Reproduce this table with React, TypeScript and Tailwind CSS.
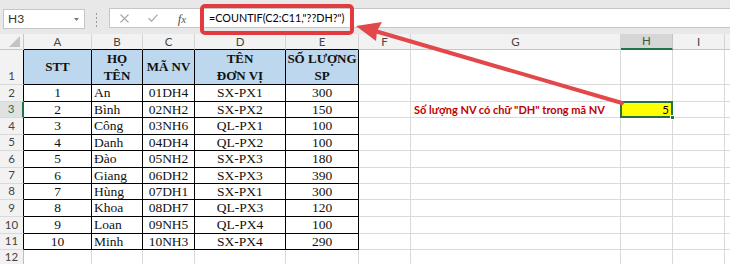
import React from 'react';

const serif = "font-['Liberation_Serif',serif]";

const data: [number, string, string, string, number][] = [
  [1, 'An', '01DH4', 'SX-PX1', 300],
  [2, 'Bình', '02NH2', 'SX-PX2', 150],
  [3, 'Công', '03NH6', 'QL-PX1', 100],
  [4, 'Danh', '04DH4', 'QL-PX2', 100],
  [5, 'Đào', '05NH2', 'SX-PX3', 180],
  [6, 'Giang', '06DH2', 'SX-PX3', 390],
  [7, 'Hùng', '07DH1', 'SX-PX1', 300],
  [8, 'Khoa', '08DH7', 'QL-PX3', 120],
  [9, 'Loan', '09NH5', 'QL-PX4', 100],
  [10, 'Minh', '10NH3', 'SX-PX4', 290],
];

const GRID = 'border-r border-b border-[#dadada]';
const TB = 'border-r border-b border-black';

function ColHeaders() {
  const cols = ['A', 'B', 'C', 'D', 'E', 'F', 'G', 'H', 'I'];
  return (
    <>
      <div className="relative bg-[#f2f2f2] border-r border-b border-[#c6c6c6]">
        <svg className="absolute right-[3px] bottom-[2px]" width="11" height="11" viewBox="0 0 11 11">
          <path d="M11 0 L11 11 L0 11 Z" fill="#c4c4c4" />
        </svg>
      </div>
      {cols.map((c) => {
        let cls = 'bg-[#f2f2f2] border-r border-[#d4d4d4] border-b border-b-[#c6c6c6] text-[#444]';
        if (['A', 'B', 'C', 'D', 'E'].includes(c)) cls = 'bg-[#f2f2f2] border-r border-[#d4d4d4] border-b border-b-black text-[#444]';
        if (c === 'H') cls = 'bg-[#d6d6d6] border-r border-[#c6c6c6] border-b-2 border-b-[#217346] text-[#3a5a45]';
        return (
          <div key={c} className={`${cls} flex items-center justify-center text-[11.5px] leading-none`}>
            {c}
          </div>
        );
      })}
      <div className="bg-[#f2f2f2] border-b border-[#c6c6c6]" />
    </>
  );
}

function RowNum({ n, table, selected }: { n: number; table: boolean; selected?: boolean }) {
  let cls = 'bg-[#f2f2f2] text-[#444] border-b border-[#d9d9d9] border-r border-r-[#bdbdbd]';
  if (table) cls = 'bg-[#f2f2f2] text-[#444] border-b border-[#d9d9d9] border-r border-r-black';
  if (selected) cls = 'bg-[#e1e1e1] text-[#217346] border-b border-[#d9d9d9] border-r-2 border-r-[#217346]';
  return (
    <div className={`${cls} flex items-end justify-center pb-[1px] text-[11.5px] leading-[14px]`}>{n}</div>
  );
}

export default function App() {
  return (
    <div className="relative w-[730px] h-[264px] overflow-hidden bg-white font-['Lato',sans-serif]">
      {/* Formula bar */}
      <div className="h-[34px] bg-[#e8e8e8] flex items-start">
        <div className="mt-[9px] ml-[3px] w-[82px] h-[20px] bg-white border border-[#c6c6c6] flex items-center justify-between pl-[4px] pr-[5px]">
          <span className="text-[12px] text-[#333]">H3</span>
          <svg width="5" height="3" viewBox="0 0 5 3">
            <path d="M0 0 H5 L2.5 3 Z" fill="#7a7a7a" />
          </svg>
        </div>
        <div className="ml-[11px] mt-[13px] flex flex-col gap-[2px]">
          <div className="w-[1px] h-[2px] bg-[#9a9a9a]" />
          <div className="w-[1px] h-[2px] bg-[#9a9a9a]" />
          <div className="w-[1px] h-[2px] bg-[#9a9a9a]" />
          <div className="w-[1px] h-[2px] bg-[#9a9a9a]" />
        </div>
        <div className="ml-[12px] mt-[8px] flex-1 h-[20px] bg-white border-y border-l border-[#c6c6c6] flex items-center">
          <div className="w-[28px] flex justify-center">
            <svg width="9" height="9" viewBox="0 0 9 9">
              <path d="M0.5 0.5 L8.5 8.5 M8.5 0.5 L0.5 8.5" stroke="#a8a8a8" strokeWidth="1.1" />
            </svg>
          </div>
          <div className="w-[30px] flex justify-center">
            <svg width="10" height="8" viewBox="0 0 10 8">
              <path d="M0.5 4.2 L3.6 7.2 L9.5 0.6" stroke="#a8a8a8" strokeWidth="1.2" fill="none" />
            </svg>
          </div>
          <div className="w-[28px] flex justify-center">
            <span className="font-['Liberation_Serif',serif] italic text-[13px] text-[#555] leading-none">
              f<span className="text-[11px]">x</span>
            </span>
          </div>
          <div className="pl-[13px] text-[10.8px] text-black leading-none">=COUNTIF(C2:C11,"??DH?")</div>
        </div>
      </div>

      {/* Sheet */}
      <div className="grid grid-cols-[24px_68px_51px_52px_91px_73px_52px_210px_52px_52px_1fr] grid-rows-[16px_35px_17px_16px_17px_16px_17px_16px_16px_17px_17px_16px_16px]">
        <ColHeaders />

        {/* Row 1 */}
        <RowNum n={1} table />
        <div className={`${TB} bg-[#bdd7ee] ${serif} font-bold text-[13px] text-[#111] flex items-center justify-center`}>STT</div>
        <div className={`${TB} bg-[#bdd7ee] ${serif} font-bold text-[13px] text-[#111] flex flex-col items-center justify-center leading-[17px]`}>
          <span>HỌ</span>
          <span>TÊN</span>
        </div>
        <div className={`${TB} bg-[#bdd7ee] ${serif} font-bold text-[13px] text-[#111] flex items-center justify-center`}>MÃ NV</div>
        <div className={`${TB} bg-[#bdd7ee] ${serif} font-bold text-[13px] text-[#111] flex flex-col items-center justify-center leading-[17px]`}>
          <span>TÊN</span>
          <span>ĐƠN VỊ</span>
        </div>
        <div className={`${TB} bg-[#bdd7ee] ${serif} font-bold text-[13px] text-[#111] flex flex-col items-center justify-center leading-[17px]`}>
          <span>SỐ LƯỢNG</span>
          <span>SP</span>
        </div>
        <div className={GRID} />
        <div className={GRID} />
        <div className={GRID} />
        <div className={GRID} />
        <div className="border-b border-[#dadada]" />

        {data.map((r, i) => {
          const rowNo = i + 2;
          const sel = rowNo === 3;
          return (
            <React.Fragment key={rowNo}>
              <RowNum n={rowNo} table selected={sel} />
              <div className={`${TB} ${serif} text-[13.5px] text-[#111] flex items-center justify-center leading-none`}>{r[0]}</div>
              <div className={`${TB} ${serif} text-[13.5px] text-[#111] flex items-center pl-[2px] leading-none`}>{r[1]}</div>
              <div className={`${TB} ${serif} text-[13.5px] text-[#111] flex items-center justify-center leading-none`}>{r[2]}</div>
              <div className={`${TB} ${serif} text-[13.5px] text-[#111] flex items-center justify-center leading-none`}>{r[3]}</div>
              <div className={`${TB} ${serif} text-[13.5px] text-[#111] flex items-center justify-center leading-none`}>{r[4]}</div>
              <div className={GRID} />
              {sel ? (
                <div className={`${GRID} flex items-center pl-[3px] whitespace-nowrap text-[11px] font-bold text-[#c00000] leading-none`}>
                  Số lượng NV có chữ "DH" trong mã NV
                </div>
              ) : (
                <div className={GRID} />
              )}
              {sel ? (
                <div className="relative border-r border-b border-[#dadada] bg-[#ffff00] flex items-center justify-end pr-[3px] text-[11.5px] text-black leading-none">
                  5
                  <div className="absolute left-[-1px] top-[-1px] right-[-1px] bottom-[-1px] border-2 border-[#217346]" />
                  <div className="absolute right-[-3px] bottom-[-3px] w-[5px] h-[5px] bg-[#217346] border border-white" />
                </div>
              ) : (
                <div className={GRID} />
              )}
              <div className={GRID} />
              <div className="border-b border-[#dadada]" />
            </React.Fragment>
          );
        })}

        {/* Row 12 */}
        <RowNum n={12} table={false} />
        <div className={GRID} />
        <div className={GRID} />
        <div className={GRID} />
        <div className={GRID} />
        <div className={GRID} />
        <div className={GRID} />
        <div className={GRID} />
        <div className={GRID} />
        <div className={GRID} />
        <div className="border-b border-[#dadada]" />
      </div>

      {/* Annotation: red callout around formula */}
      <div className="absolute left-[200px] top-[4px] w-[154px] h-[31px] border-[4px] border-[#e23b3f] rounded-[5px]" />

      {/* Annotation arrow */}
      <svg className="absolute left-0 top-0 pointer-events-none" width="730" height="264" viewBox="0 0 730 264">
        <line x1="622" y1="103" x2="375" y2="31" stroke="#e2474a" strokeWidth="4" strokeLinecap="round" />
        <path d="M356 26 L382 22 L377 31 L376 41 Z" fill="#e2474a" />
      </svg>
    </div>
  );
}
